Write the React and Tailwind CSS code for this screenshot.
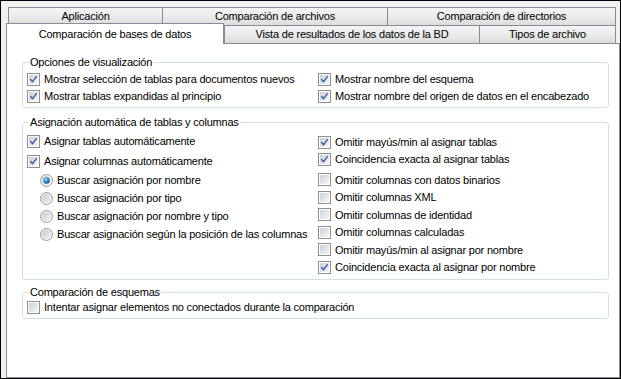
const font = "font-['Liberation_Sans',Arial,sans-serif]"

function Check({on}){
  return (
    <svg width="13" height="13" viewBox="0 0 13 13" className="shrink-0">
      <rect x="0.5" y="0.5" width="12" height="12" fill="#fff" stroke="#8e8f8f"/>
      <rect x="2" y="2" width="9" height="9" fill="url(#cbFill)"/>
      {on && <path d="M3.6 6.5 L5.5 8.8 L9.4 3.6" fill="none" stroke="#4a65a3" strokeWidth="1.5" strokeLinecap="round" strokeLinejoin="round"/>}
    </svg>
  )
}

function Radio({on}){
  return (
    <svg width="13" height="13" viewBox="0 0 13 13" className="shrink-0">
      <circle cx="6.5" cy="6.5" r="6" fill="url(#rdOuter)" stroke="#9c9c9c"/>
      <circle cx="6.5" cy="6.5" r="4.2" fill="url(#rdInner)"/>
      {on && <circle cx="6.5" cy="6.5" r="3.2" fill="url(#rdDot)"/>}
    </svg>
  )
}

function Row({children, h='h-[17px]', className=''}){
  return <div className={`flex items-center gap-[4px] ${h} ${className}`}>{children}</div>
}

function Group({title, className='', children}){
  return (
    <fieldset className={`border border-[#d5dfe5] rounded-[3px] w-[587px] ${className}`}>
      <legend className="ml-[6px] px-[1px] leading-[13px]">{title}</legend>
      {children}
    </fieldset>
  )
}

const tabBack = "border-t border-l border-[#898c95] bg-gradient-to-b from-[#f4f4f4] via-[#ebebeb] to-[#dcdcdc] flex items-center justify-center"

export default function App(){
  return (
    <div className={`w-[621px] h-[379px] border border-black bg-[#f0f0f0] flex flex-col text-[11px] tracking-[-0.2px] text-black ${font}`}>
      <svg width="0" height="0" className="block">
        <defs>
          <linearGradient id="cbFill" x1="0" y1="0" x2="1" y2="1">
            <stop offset="0" stopColor="#cbcfd5"/>
            <stop offset="1" stopColor="#f7f7f7"/>
          </linearGradient>
          <linearGradient id="rdOuter" x1="0" y1="0" x2="1" y2="1">
            <stop offset="0" stopColor="#e4e4e4"/>
            <stop offset="1" stopColor="#fbfbfb"/>
          </linearGradient>
          <linearGradient id="rdInner" x1="0" y1="0" x2="1" y2="1">
            <stop offset="0" stopColor="#c9c9c9"/>
            <stop offset="1" stopColor="#f2f2f2"/>
          </linearGradient>
          <radialGradient id="rdDot" cx="0.4" cy="0.35" r="0.7">
            <stop offset="0" stopColor="#a6e2fb"/>
            <stop offset="0.5" stopColor="#2d8ccd"/>
            <stop offset="1" stopColor="#0b4f86"/>
          </radialGradient>
        </defs>
      </svg>

      <div className="mt-[6px] ml-[7px] flex h-[18px]">
        <div className={`${tabBack} w-[154px]`}>Aplicación</div>
        <div className={`${tabBack} w-[225px]`}>Comparación de archivos</div>
        <div className={`${tabBack} w-[229px] border-r`}>Comparación de directorios</div>
      </div>
      <div className="ml-[5px] flex items-end h-[18px]">
        <div className="relative z-10 -mb-px h-[21px] w-[218px] border-t border-l border-r border-[#898c95] bg-white flex items-center justify-center">Comparación de bases de datos</div>
        <div className={`${tabBack} w-[255px] h-[18px]`}>Vista de resultados de los datos de la BD</div>
        <div className={`${tabBack} w-[137px] h-[18px] border-r`}>Tipos de archivo</div>
      </div>

      <div className="ml-[5px] flex-1 bg-white border border-[#898c95] pl-[15px]">
        <Group title="Opciones de visualización" className="mt-[12px]">
          <div className="grid grid-cols-[291px_1fr] pl-[4px] pt-[2px] pb-[2px]">
            <div>
              <Row><Check on/><span>Mostrar selección de tablas para documentos nuevos</span></Row>
              <Row><Check on/><span>Mostrar tablas expandidas al principio</span></Row>
            </div>
            <div>
              <Row><Check on/><span>Mostrar nombre del esquema</span></Row>
              <Row><Check on/><span>Mostrar nombre del origen de datos en el encabezado</span></Row>
            </div>
          </div>
        </Group>

        <Group title="Asignación automática de tablas y columnas" className="mt-[8px]">
          <div className="grid grid-cols-[291px_1fr] pl-[4px] pb-[3px]">
            <div>
              <Row className="mt-[4px]"><Check on/><span>Asignar tablas automáticamente</span></Row>
              <Row className="mt-[3px]"><Check on/><span>Asignar columnas automáticamente</span></Row>
              <div className="mt-[1px] pl-[13px]">
                <Row h="h-[18px]"><Radio on/><span>Buscar asignación por nombre</span></Row>
                <Row h="h-[18px]"><Radio/><span>Buscar asignación por tipo</span></Row>
                <Row h="h-[18px]"><Radio/><span>Buscar asignación por nombre y tipo</span></Row>
                <Row h="h-[18px]"><Radio/><span>Buscar asignación según la posición de las columnas</span></Row>
              </div>
            </div>
            <div className="pt-[5px]">
              <Row><Check on/><span>Omitir mayús/min al asignar tablas</span></Row>
              <Row><Check on/><span>Coincidencia exacta al asignar tablas</span></Row>
              <div className="mt-[3px]">
                <Row h="h-[17.5px]"><Check/><span>Omitir columnas con datos binarios</span></Row>
                <Row h="h-[17.5px]"><Check/><span>Omitir columnas XML</span></Row>
                <Row h="h-[17.5px]"><Check/><span>Omitir columnas de identidad</span></Row>
                <Row h="h-[17.5px]"><Check/><span>Omitir columnas calculadas</span></Row>
                <Row h="h-[17.5px]"><Check/><span>Omitir mayús/min al asignar por nombre</span></Row>
                <Row h="h-[17.5px]"><Check on/><span>Coincidencia exacta al asignar por nombre</span></Row>
              </div>
            </div>
          </div>
        </Group>

        <Group title="Comparación de esquemas" className="mt-[6px]">
          <div className="pl-[4px] pb-[2px]">
            <Row><Check/><span>Intentar asignar elementos no conectados durante la comparación</span></Row>
          </div>
        </Group>
      </div>
    </div>
  )
}
